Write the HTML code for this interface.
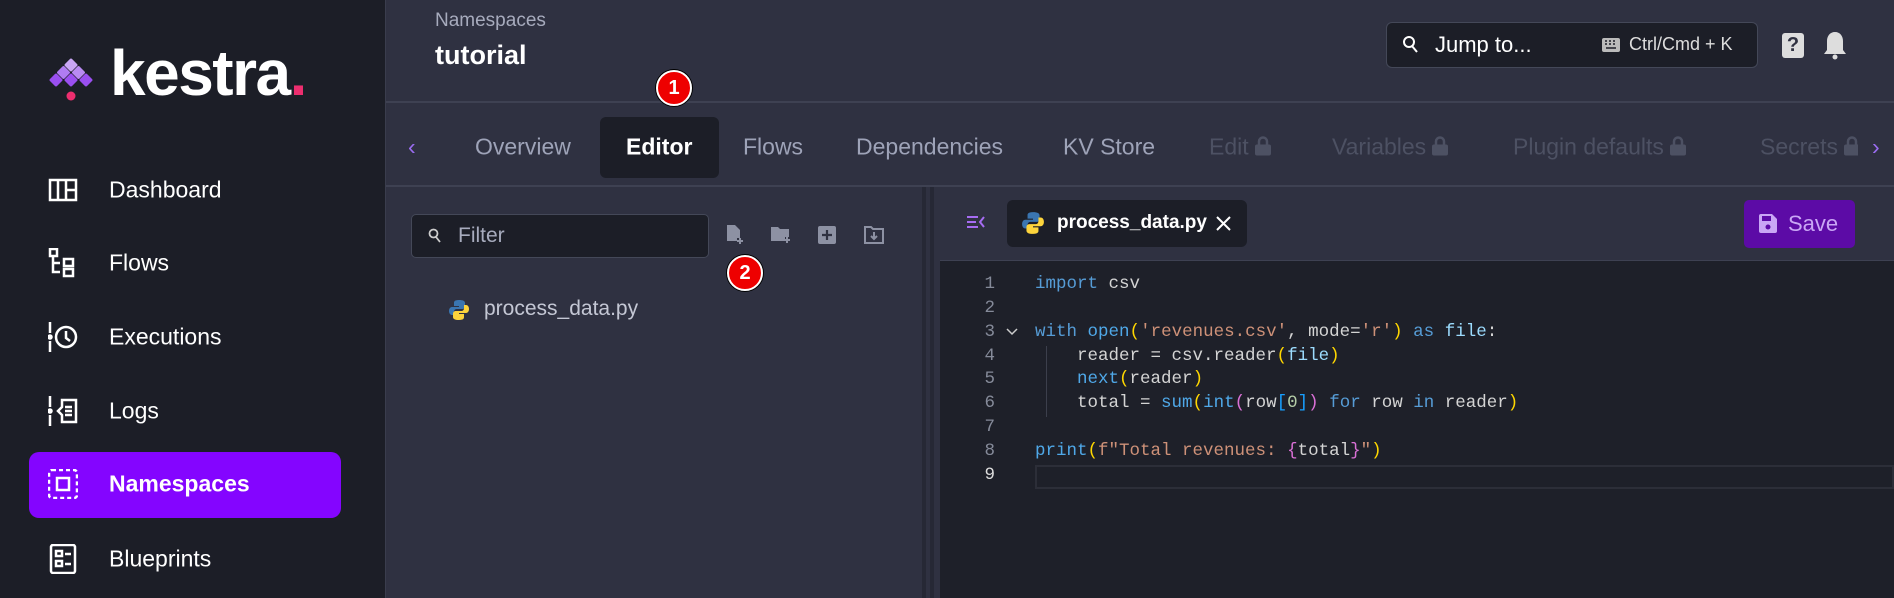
<!DOCTYPE html>
<html><head><meta charset="utf-8"><style>
*{margin:0;padding:0;box-sizing:border-box}
body{width:1894px;height:598px;overflow:hidden;background:#2f3141;font-family:"Liberation Sans",sans-serif;position:relative;color:#fff}
.a{position:absolute}
#side{left:0;top:0;width:386px;height:598px;background:#1c1e27;border-right:1px solid #3a3d4d}
.nav{position:absolute;left:109px;font-size:23px;color:#fff;transform:translateY(-50%)}
.ic{position:absolute;left:48px;width:30px;height:30px;transform:translateY(-50%)}
.tab{position:absolute;top:147px;transform:translateY(-50%);font-size:23px;color:#9ea3b8;white-space:nowrap}
.dis{color:#4d5163}
.lk{display:inline-block;width:16px;height:20px;margin-left:6px;vertical-align:-1px}
.code{position:absolute;left:0;font-family:"Liberation Mono",monospace;font-size:17.5px;white-space:pre;color:#d4d4d4}
.ln{position:absolute;width:40px;text-align:right;left:955px;font-family:"Liberation Mono",monospace;font-size:17.5px;color:#858a99}
.k{color:#569cd6}.f{color:#4fa8e8}.v{color:#9cdcfe}.s{color:#ce9178}.y{color:#ffd700}.m{color:#da70d6}.b{color:#179fff}.n{color:#b5cea8}
.badge{position:absolute;width:36px;height:36px;border-radius:50%;background:#e00;border:2px solid #fff;box-shadow:0 0 0 1px #000;color:#fff;font-weight:bold;font-size:20px;text-align:center;line-height:32px}
</style></head><body>
<div id="side" class="a">
  <svg class="a" style="left:48px;top:56px" width="48" height="48" viewBox="0 0 48 48">
    <rect x="18" y="4" width="10" height="10" rx="1.5" transform="rotate(45 23 9)" fill="#c9a6f5"/>
    <rect x="10.5" y="11.5" width="10" height="10" rx="1.5" transform="rotate(45 15.5 16.5)" fill="#b07cf2"/>
    <rect x="25.5" y="11.5" width="10" height="10" rx="1.5" transform="rotate(45 30.5 16.5)" fill="#b98af3"/>
    <rect x="3" y="19" width="10" height="10" rx="1.5" transform="rotate(45 8 24)" fill="#9a4ff0"/>
    <rect x="18" y="19" width="10" height="10" rx="1.5" transform="rotate(45 23 24)" fill="#9a4ff0"/>
    <rect x="33" y="19" width="10" height="10" rx="1.5" transform="rotate(45 38 24)" fill="#9a4ff0"/>
    <circle cx="23" cy="40" r="4.5" fill="#ed2e6f"/>
  </svg>
  <div class="a" style="left:110px;top:36px;font-size:64px;font-weight:bold;letter-spacing:-1.5px">kestra<span style="color:#ed2e6f">.</span></div>

  <svg class="ic" style="top:190px" viewBox="0 0 30 30" fill="none" stroke="#fff" stroke-width="2.5"><rect x="2" y="5" width="26" height="20"/><path d="M10 5v20M18 5v20M18 15h10"/></svg>
  <div class="nav" style="top:190px">Dashboard</div>
  <svg class="ic" style="top:263px" viewBox="0 0 30 30" fill="none" stroke="#fff" stroke-width="2.5"><rect x="2" y="1" width="7" height="7"/><path d="M5 8v16h7M5 15h7"/><rect x="16" y="11" width="9" height="7"/><rect x="16" y="21" width="9" height="7"/></svg>
  <div class="nav" style="top:263px">Flows</div>
  <svg class="ic" style="top:337px" viewBox="0 0 30 30" fill="none" stroke="#fff" stroke-width="2.5"><path d="M2 0v11M2 19v11"/><circle cx="2" cy="15" r="1.5" fill="#fff"/><circle cx="18" cy="15" r="10"/><path d="M18 9v7l4 3"/></svg>
  <div class="nav" style="top:337px">Executions</div>
  <svg class="ic" style="top:411px" viewBox="0 0 30 30" fill="none" stroke="#fff" stroke-width="2.5"><path d="M2 0v11M2 19v11"/><circle cx="2" cy="15" r="1.5" fill="#fff"/><path d="M10 15l4-4V4h14v22H14v-7z"/><path d="M17 11h7M17 15h7M17 19h7"/></svg>
  <div class="nav" style="top:411px">Logs</div>
  <div class="a" style="left:29px;top:452px;width:312px;height:66px;background:#8405ff;border-radius:10px"></div>
  <svg class="ic" style="top:484px" viewBox="0 0 30 30" fill="none" stroke="#fff" stroke-width="2.5" stroke-dasharray="4 3"><rect x="1" y="1" width="28" height="28" rx="3"/><rect x="9" y="9" width="12" height="12" stroke-dasharray="none"/></svg>
  <div class="nav" style="top:484px;font-weight:bold">Namespaces</div>
  <svg class="ic" style="top:559px" viewBox="0 0 30 30" fill="none" stroke="#fff" stroke-width="2.5"><rect x="3" y="1" width="24" height="28" rx="2"/><rect x="8" y="7" width="6" height="5"/><rect x="8" y="17" width="6" height="5"/><path d="M17 10h6M17 20h6"/></svg>
  <div class="nav" style="top:559px">Blueprints</div>
</div>

<!-- header -->
<div class="a" style="left:435px;top:10px;font-size:19px;color:#a7abbd">Namespaces</div>
<div class="a" style="left:435px;top:40px;font-size:27px;font-weight:bold">tutorial</div>
<div class="a" style="left:1386px;top:22px;width:372px;height:46px;background:#1c1e27;border:1px solid #444858;border-radius:6px"></div>
<svg class="a" style="left:1402px;top:35px" width="18" height="20" viewBox="0 0 18 20" fill="none" stroke="#fff" stroke-width="2"><circle cx="7" cy="7" r="5"/><path d="M10 11l5 6"/></svg>
<div class="a" style="left:1435px;top:32px;font-size:22px;color:#fff">Jump to...</div>
<svg class="a" style="left:1602px;top:38px" width="18" height="14" viewBox="0 0 18 14"><rect width="18" height="14" rx="2" fill="#bbb"/><path d="M3 3h2M7 3h2M11 3h2M3 6h2M7 6h2M11 6h2M4 10h10" stroke="#1c1e27" stroke-width="1.5"/></svg>
<div class="a" style="left:1629px;top:34px;font-size:18px;color:#ddd">Ctrl/Cmd + K</div>
<div class="a" style="left:1782px;top:33px;width:22px;height:25px;background:#ddd;border-radius:3px;color:#2f3141;font-weight:bold;font-size:20px;text-align:center;line-height:25px">?</div>
<svg class="a" style="left:1823px;top:30px" width="24" height="30" viewBox="0 0 24 30"><path d="M12 2c-5 0-8 4-8 9v9l-3 4h22l-3-4v-9c0-5-3-9-8-9z" fill="#ddd"/><circle cx="12" cy="27" r="2.5" fill="#ddd"/></svg>
<div class="a" style="left:386px;top:101px;width:1508px;height:2px;background:#3e4152"></div>

<!-- tabs -->
<div class="a" style="left:600px;top:117px;width:119px;height:61px;background:#1c1e27;border-radius:6px"></div>
<div class="tab" style="left:408px;color:#9a6cf0">‹</div>
<div class="tab" style="left:475px">Overview</div>
<div class="tab" style="left:626px;color:#fff;font-weight:bold">Editor</div>
<div class="tab" style="left:743px">Flows</div>
<div class="tab" style="left:856px">Dependencies</div>
<div class="tab" style="left:1063px">KV Store</div>
<div class="tab dis" style="left:1209px">Edit<svg class="lk" viewBox="0 0 16 20"><path d="M4 9V6a4 4 0 018 0v3" fill="none" stroke="#4d5163" stroke-width="2.5"/><rect y="9" width="16" height="11" rx="2" fill="#4d5163"/></svg></div>
<div class="tab dis" style="left:1332px">Variables<svg class="lk" viewBox="0 0 16 20"><path d="M4 9V6a4 4 0 018 0v3" fill="none" stroke="#4d5163" stroke-width="2.5"/><rect y="9" width="16" height="11" rx="2" fill="#4d5163"/></svg></div>
<div class="tab dis" style="left:1513px">Plugin defaults<svg class="lk" viewBox="0 0 16 20"><path d="M4 9V6a4 4 0 018 0v3" fill="none" stroke="#4d5163" stroke-width="2.5"/><rect y="9" width="16" height="11" rx="2" fill="#4d5163"/></svg></div>
<div class="tab dis" style="left:1760px">Secrets<svg class="lk" viewBox="0 0 16 20"><path d="M4 9V6a4 4 0 018 0v3" fill="none" stroke="#4d5163" stroke-width="2.5"/><rect y="9" width="16" height="11" rx="2" fill="#4d5163"/></svg></div>
<div class="a" style="left:1858px;top:117px;width:36px;height:60px;background:#2f3141"></div>
<div class="tab" style="left:1872px;color:#9a6cf0">›</div>
<div class="badge" style="left:656px;top:70px">1</div>
<div class="a" style="left:386px;top:185px;width:1508px;height:2px;background:#3e4152"></div>

<!-- left panel -->
<div class="a" style="left:922px;top:187px;width:4px;height:411px;background:#262835"></div>
<div class="a" style="left:930px;top:187px;width:4px;height:411px;background:#262835"></div>
<div class="a" style="left:411px;top:214px;width:298px;height:44px;background:#1c1e27;border:1px solid #444858;border-radius:5px"></div>
<svg class="a" style="left:428px;top:228px" width="14" height="16" viewBox="0 0 14 16" fill="none" stroke="#ccc" stroke-width="1.8"><circle cx="5.5" cy="5.5" r="4"/><path d="M8 9l4 5"/></svg>
<div class="a" style="left:458px;top:224px;font-size:21px;color:#a7abbd">Filter</div>
<svg class="a" style="left:725px;top:224px" width="20" height="22" viewBox="0 0 20 22" fill="#8d91a3"><path d="M2 1h8l5 5v8h-3v3H2z"/><path d="M15 14v6M12 17h6" stroke="#8d91a3" stroke-width="2"/></svg>
<svg class="a" style="left:770px;top:225px" width="22" height="20" viewBox="0 0 22 20" fill="#8d91a3"><path d="M1 2h7l2 2h9v8h-4v4H1z"/><path d="M17 12v6M14 15h6" stroke="#8d91a3" stroke-width="2"/></svg>
<svg class="a" style="left:818px;top:226px" width="18" height="18" viewBox="0 0 18 18"><rect width="18" height="18" rx="2" fill="#8d91a3"/><path d="M9 4v10M4 9h10" stroke="#2f3141" stroke-width="2.2"/></svg>
<svg class="a" style="left:864px;top:226px" width="20" height="18" viewBox="0 0 20 18" fill="none" stroke="#8d91a3" stroke-width="2"><path d="M1 1h6l2 2h10v14H1z"/><path d="M10 6v7M7 10l3 3 3-3"/></svg>
<div class="badge" style="left:727px;top:255px">2</div>
<svg class="a" style="left:448px;top:299px" width="22" height="22" viewBox="0 0 22 22"><path d="M11 1c-5 0-5 2-5 3v3h5v1H4c-2 0-3 2-3 4s1 4 3 4h2v-3c0-2 1-3 3-3h5c2 0 3-1 3-3V4c0-2-2-3-6-3z" fill="#3a75b0"/><path d="M11 21c5 0 5-2 5-3v-3h-5v-1h7c2 0 3-2 3-4s-1-4-3-4h-2v3c0 2-1 3-3 3H8c-2 0-3 1-3 3v3c0 2 2 3 6 3z" fill="#fdd43c"/></svg>
<div class="a" style="left:484px;top:297px;font-size:21px;color:#c4c7d4">process_data.py</div>

<!-- right panel -->
<svg class="a" style="left:966px;top:214px" width="20" height="16" viewBox="0 0 20 16" fill="none" stroke="#a66cf2" stroke-width="2"><path d="M1 3h11M1 8h9M1 13h11M18 3l-4 5 4 5"/></svg>
<div class="a" style="left:1007px;top:200px;width:240px;height:47px;background:#1c1e27;border-radius:6px"></div>
<svg class="a" style="left:1021px;top:211px" width="24" height="24" viewBox="0 0 22 22"><path d="M11 1c-5 0-5 2-5 3v3h5v1H4c-2 0-3 2-3 4s1 4 3 4h2v-3c0-2 1-3 3-3h5c2 0 3-1 3-3V4c0-2-2-3-6-3z" fill="#3a75b0"/><path d="M11 21c5 0 5-2 5-3v-3h-5v-1h7c2 0 3-2 3-4s-1-4-3-4h-2v3c0 2-1 3-3 3H8c-2 0-3 1-3 3v3c0 2 2 3 6 3z" fill="#fdd43c"/></svg>
<div class="a" style="left:1057px;top:212px;font-size:19px;font-weight:bold">process_data.py</div>
<svg class="a" style="left:1216px;top:216px" width="15" height="15" viewBox="0 0 15 15" stroke="#fff" stroke-width="2"><path d="M1 1l13 13M14 1L1 14"/></svg>
<div class="a" style="left:1744px;top:200px;width:111px;height:48px;background:#5c0ba6;border-radius:5px"></div>
<svg class="a" style="left:1759px;top:214px" width="18" height="19" viewBox="0 0 18 19"><path d="M0 2a2 2 0 012-2h11l5 5v12a2 2 0 01-2 2H2a2 2 0 01-2-2z" fill="#c9a6f5"/><rect x="3" y="2" width="9" height="5" fill="#5c0ba6"/><circle cx="9" cy="13" r="2.5" fill="#5c0ba6"/></svg>
<div class="a" style="left:1788px;top:211px;font-size:22px;color:#c9a6f5">Save</div>

<div class="a" style="left:940px;top:260px;width:954px;height:338px;background:#1e2029;border-top:1px solid #3e4152"></div>
<div class="a" style="left:1035px;top:465px;width:859px;height:24px;border:2px solid #2c2e38"></div>
<div class="a" style="left:1046px;top:346px;width:1px;height:71px;background:#3c3f4c"></div>

<div class="ln" style="top:274px">1</div>
<div class="ln" style="top:298px">2</div>
<div class="ln" style="top:322px">3</div>
<div class="ln" style="top:346px">4</div>
<div class="ln" style="top:369px">5</div>
<div class="ln" style="top:393px">6</div>
<div class="ln" style="top:417px">7</div>
<div class="ln" style="top:441px">8</div>
<div class="ln" style="top:465px;color:#ddd">9</div>
<svg class="a" style="left:1006px;top:328px" width="12" height="8" viewBox="0 0 12 8" fill="none" stroke="#ccc" stroke-width="1.5"><path d="M1 1l5 5 5-5"/></svg>
<div class="code" style="left:1035px;top:274px"><span class="k">import</span> csv</div>
<div class="code" style="left:1035px;top:322px"><span class="k">with</span> <span class="f">open</span><span class="y">(</span><span class="s">'revenues.csv'</span>, mode=<span class="s">'r'</span><span class="y">)</span> <span class="k">as</span> <span class="v">file</span>:</div>
<div class="code" style="left:1035px;top:346px">    reader = csv.reader<span class="y">(</span><span class="v">file</span><span class="y">)</span></div>
<div class="code" style="left:1035px;top:369px">    <span class="f">next</span><span class="y">(</span>reader<span class="y">)</span></div>
<div class="code" style="left:1035px;top:393px">    total = <span class="f">sum</span><span class="y">(</span><span class="f">int</span><span class="m">(</span>row<span class="b">[</span><span class="n">0</span><span class="b">]</span><span class="m">)</span> <span class="k">for</span> row <span class="k">in</span> reader<span class="y">)</span></div>
<div class="code" style="left:1035px;top:441px"><span class="f">print</span><span class="y">(</span><span class="s">f"Total revenues: </span><span class="m">{</span>total<span class="m">}</span><span class="s">"</span><span class="y">)</span></div>
</body></html>
